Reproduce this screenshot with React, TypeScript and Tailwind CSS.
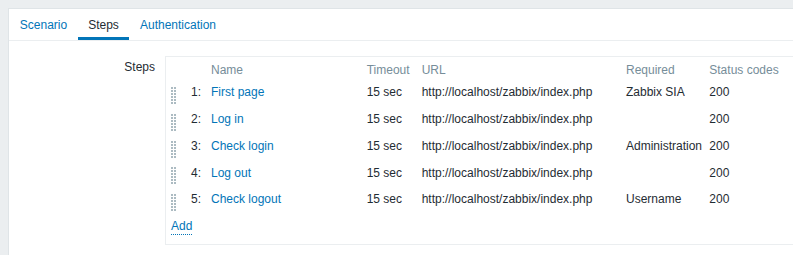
import React from "react"

const steps = [
  { n: 1, name: "First page", required: "Zabbix SIA" },
  { n: 2, name: "Log in", required: "" },
  { n: 3, name: "Check login", required: "Administration" },
  { n: 4, name: "Log out", required: "" },
  { n: 5, name: "Check logout", required: "Username" },
]

const DragHandle = () => (
  <svg width="5" height="17" viewBox="0 0 5 17" className="block">
    {[0, 3, 6, 9, 12, 15].map((y) => (
      <g key={y} fill="#acbbc2">
        <rect x="0" y={y} width="2" height="2" />
        <rect x="3" y={y} width="2" height="2" />
      </g>
    ))}
  </svg>
)

export default function App() {
  return (
    <div className="h-screen w-screen overflow-hidden bg-[#ebeef0] text-[12px] leading-[14px] text-[#1f2c33] font-['Liberation_Sans',Arial,sans-serif]">
      <div className="ml-[8px] mt-[8px] w-[830px] h-[300px] border border-[#dfe4e7] bg-white">
        {/* tabs */}
        <div className="flex border-b border-[#ebeef0]">
          <div className="w-[69px] h-[31px] pt-[4px] flex items-center justify-center border-b-[3px] border-transparent text-[#0275b8]">
            Scenario
          </div>
          <div className="w-[51px] h-[31px] pt-[4px] flex items-center justify-center border-b-[3px] border-[#0275b8]">
            Steps
          </div>
          <div className="w-[98px] h-[31px] pt-[4px] flex items-center justify-center border-b-[3px] border-transparent text-[#0275b8]">
            Authentication
          </div>
        </div>

        {/* form */}
        <div className="flex pt-[15px]">
          <div className="w-[156px] pr-[10px] pt-[4px] text-right">Steps</div>
          <div className="w-[660px] border border-[#ebeef0] pl-[5px] pb-[4px]">
            <div className="flex h-[22px] pt-[6px] text-[#768d99]">
              <div className="w-[40px]" />
              <div className="w-[155.7px]">Name</div>
              <div className="w-[55px]">Timeout</div>
              <div className="w-[204.3px]">URL</div>
              <div className="w-[83.3px]">Required</div>
              <div>Status codes</div>
            </div>
            {steps.map((s) => (
              <div key={s.n} className="flex items-center h-[26.75px]">
                <div className="w-[10px] self-start mt-[8px]">
                  <DragHandle />
                </div>
                <div className="w-[30px] pr-[10px] text-right">{s.n}:</div>
                <div className="w-[155.7px] text-[#0275b8]">{s.name}</div>
                <div className="w-[55px]">15 sec</div>
                <div className="w-[204.3px]">http://localhost/zabbix/index.php</div>
                <div className="w-[83.3px] whitespace-nowrap">{s.required}</div>
                <div>200</div>
              </div>
            ))}
            <div className="flex items-center h-[26.75px] pt-[2px]">
              <span className="text-[#0275b8] border-b border-dotted border-[#0275b8] leading-[15px]">Add</span>
            </div>
          </div>
        </div>
      </div>
    </div>
  )
}
